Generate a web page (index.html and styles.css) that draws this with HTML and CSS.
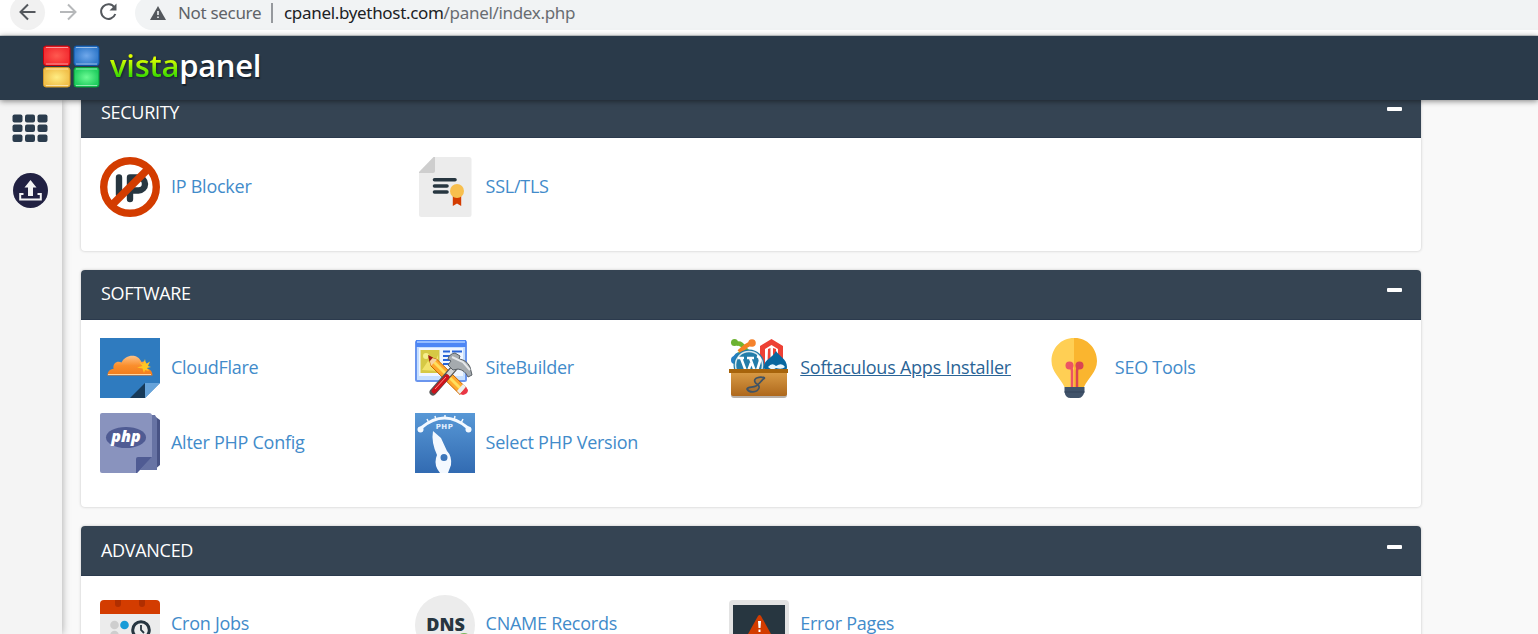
FILE: index.html
```html
<!DOCTYPE html>
<html lang="en">
<head>
<meta charset="utf-8">
<title>vistapanel</title>
<link rel="stylesheet" href="styles.css">
</head>
<body>
<div class="browser">
  <span class="nav-back"><svg width="35" height="35" viewBox="0 0 35 35"><path d="M25.500 17H11M18 9.500 10.500 17l7.500 7.500" fill="none" stroke="#54585d" stroke-width="2"/></svg></span>
  <svg class="nav-forward" width="20" height="20" viewBox="0 0 20 20"><path d="M2 10h15M10 2.500 17.500 10 10 17.500" fill="none" stroke="#b6b8ba" stroke-width="2"/></svg>
  <svg class="nav-reload" width="20" height="20" viewBox="0 0 20 20"><path d="M16.500 5.500A7.300 7.300 0 1 0 17.300 12" fill="none" stroke="#54585d" stroke-width="2"/><path d="M18.500 1.500v7h-7z" fill="#54585d"/></svg>
  <div class="address">
    <svg class="warn" width="16" height="14" viewBox="0 0 16 14"><path d="M8 0l8 14H0z" fill="#54585d"/><path d="M7.200 5h1.600v4H7.200zM7.200 10.400h1.600V12H7.200z" fill="#f1f3f4"/></svg>
    <span class="insecure">Not secure</span><span class="divider"></span>
    <span class="url">cpanel.byethost.com<span class="path">/panel/index.php</span></span>
  </div>
</div>
<header class="topbar">
  <svg class="logo" width="57" height="43" viewBox="0 0 57 43">
    <defs>
      <radialGradient id="lr"><stop offset="0" stop-color="#ff5a50"/><stop offset="1" stop-color="#f32c31"/></radialGradient>
      <radialGradient id="lb"><stop offset="0" stop-color="#70a8eb"/><stop offset="1" stop-color="#3179ca"/></radialGradient>
      <radialGradient id="ly"><stop offset="0" stop-color="#ffed83"/><stop offset="1" stop-color="#f1c04b"/></radialGradient>
      <radialGradient id="lg"><stop offset="0" stop-color="#6dfb94"/><stop offset="1" stop-color="#22cf60"/></radialGradient>
    </defs>
    <rect x=".5" y="1" width="26.500" height="19.500" rx="2.500" fill="url(#lr)" stroke="#c9000b"/>
    <rect x="31" y="1" width="25" height="19.500" rx="2.500" fill="url(#lb)" stroke="#0d55a8"/>
    <rect x=".5" y="22.500" width="26.500" height="19.500" rx="2.500" fill="url(#ly)" stroke="#d39a2a"/>
    <rect x="31" y="22.500" width="25" height="19.500" rx="2.500" fill="url(#lg)" stroke="#079d39"/>
    <path d="M3 2.500h22M33 2.500h21M3 24h22M33 24h21M3 40.500h22M33 40.500h21M3 19h22M33 19h21" stroke="#fff" stroke-opacity=".5"/>
  </svg>
  <span class="brand"><span class="brand-green">vista</span><span class="brand-white">panel</span></span>
</header>
<div class="workspace">
  <nav class="sidebar">
    <svg width="36" height="29" viewBox="0 0 36 29" fill="#2b3c4d"><rect x=".5" y=".5" width="10" height="8" rx="2"/><rect x="13" y=".5" width="10" height="8" rx="2"/><rect x="25.500" y=".5" width="10" height="8" rx="2"/><rect x=".5" y="10.500" width="10" height="7.500" rx="2"/><rect x="13" y="10.500" width="10" height="7.500" rx="2"/><rect x="25.500" y="10.500" width="10" height="7.500" rx="2"/><rect x=".5" y="20.500" width="10" height="7.500" rx="2"/><rect x="13" y="20.500" width="10" height="7.500" rx="2"/><rect x="25.500" y="20.500" width="10" height="7.500" rx="2"/></svg>
    <svg class="upload" width="35" height="35" viewBox="0 0 35 35"><circle cx="17.500" cy="17.500" r="17.500" fill="#212142"/><path d="M17.500 7l6 7.500H20V23h-5v-8.500h-3.500z" fill="#f4f4f4"/><path d="M10.500 21H7.200v5.500h20.600V21h-3.300" fill="none" stroke="#f4f4f4" stroke-width="2"/></svg>
  </nav>
  <main class="main">
    <section class="panel">
      <h2 class="panel-head">SECURITY<span class="minus"></span></h2>
      <div class="panel-body">
        <a class="item"><svg class="icon" viewBox="0 0 60 60"><circle cx="30" cy="30" r="26.500" fill="#fff"/><path d="M19 20.500v17M30 42V20.500h8.500a6.500 6.500 0 0 1 0 13H30" fill="none" stroke="#273640" stroke-width="6.400" stroke-linecap="round" stroke-linejoin="round"/><path d="M13 47 47 13" stroke="#d33c00" stroke-width="7.500"/><circle cx="30" cy="30" r="26.300" fill="none" stroke="#d33c00" stroke-width="7.400"/></svg>IP Blocker</a>
        <a class="item"><svg class="icon" viewBox="0 0 60 60"><path d="M20 0h34q2.500 0 2.500 2.500v55q0 2.500-2.500 2.500H6.500Q4 60 4 57.500V16z" fill="#ececec"/><path d="M18.500 0H20v14q0 2-2 2H4v-1z" fill="#cecece"/><path d="M19.500 22.800H40M19.500 29H32M19.500 35H32" stroke="#273640" stroke-width="3.600" stroke-linecap="round"/><path d="M37.800 38h8.400v11L42 46.500 37.800 49z" fill="#d33c00"/><circle cx="42" cy="34" r="7" fill="#f7bf4e"/></svg>SSL/TLS</a>
      </div>
    </section>
    <section class="panel panel-software">
      <h2 class="panel-head">SOFTWARE<span class="minus"></span></h2>
      <div class="panel-body">
        <a class="item"><svg class="icon" viewBox="0 0 60 60"><defs><linearGradient id="cf" x2="0" y2="1"><stop offset="0" stop-color="#ffc184"/><stop offset=".5" stop-color="#fa8e2c"/><stop offset="1" stop-color="#f27b1a"/></linearGradient></defs><path d="M0 0h60v45L45 60H0z" fill="#2f7bbf"/><path d="M45 45v15H30z" fill="#173a59"/><path d="M45 45h15L45 60z" fill="#66a3da"/><path d="M7.500 37.500c0-4 2.500-6.500 6-6.500-1-6 4-8.500 8-6.500 4-8 16-9.500 20-.5 2-1 4-.5 5 1 1 2 .5 4-.5 5.500 4 0 6.500 3 6.500 7z" fill="url(#cf)"/><path d="M45 21l1 5 4-2.500-2 4.500 3 1-4 1 2 3-4-1-1 3-1.500-4.500-5.500-1 5.500-1.500-3.500-4 4 2z" fill="#ffc722"/><path d="M8 36.500h43" fill="none" stroke="#ffd6a0" stroke-width="1"/></svg>CloudFlare</a>
        <a class="item"><svg class="icon" viewBox="0 0 60 60"><rect x="1" y="3" width="50" height="40" rx="1.500" fill="#c6dfff" stroke="#6a95ee" stroke-width="2"/><path d="M1 2h50v7H1z" fill="#4c86f5"/><path d="M2 4h48" stroke="#95bdff" stroke-width="2"/><rect x="4" y="10" width="44" height="28" fill="#f0f6ff"/><rect x="5.500" y="12" width="19" height="23" fill="#d6c945"/><path d="M7 32l6-9 5 5 5-11v16z" fill="#f2e36b"/><circle cx="11" cy="18" r="3" fill="#f5ef8c"/><path d="M28 13.500h7M37 13.500h10M28 18h14M28 22h10M28 26h8" stroke="#2864d8" stroke-width="2"/><g transform="translate(1 1)"><path d="M13 18l8 2.500L50 48.500 44 55.500 15 27z" fill="#ffa92d" stroke="#c66100"/><path d="M18 23l29 29" stroke="#ffdf5e" stroke-width="3"/><path d="M13 18l8 2.500-6 6.500z" fill="#f7d2a0"/><path d="M12 16l5 2.500-3.500 4z" fill="#9f1714"/><path d="M41 52l6-7 3 3-6 7z" fill="#eee"/><path d="M44 55l6-7 2 3q0 4-5 5z" fill="#e93645"/></g><path d="M18 54 40 29" stroke="#555" stroke-width="7" stroke-linecap="round"/><path d="M33 37 40 29" stroke="#d6d6d6" stroke-width="4.500"/><path d="M19 53 32 39" stroke="#ce121a" stroke-width="5" stroke-linecap="round"/><path d="M20 51 31 39" stroke="#ff8b82" stroke-width="1"/><path d="M33 21q1-5 7-6l5 3-1 3q8 1 11 8l2 8-4 2q-3-7-10-8l-5 1-5-5 3-4z" fill="#a5aaae" stroke="#5a6066"/><path d="M37 19l11 5 7 8" fill="none" stroke="#e5e7e9" stroke-width="2"/></svg>SiteBuilder</a>
        <a class="item is-hover"><svg class="icon" viewBox="0 0 60 60"><defs><linearGradient id="bx" x2="0" y2="1"><stop offset="0" stop-color="#d99b45"/><stop offset="1" stop-color="#ae681c"/></linearGradient></defs><path d="M7 6q5-2 8 4l5 5M6 24q0-8 10-10" fill="none" stroke="#74b52d" stroke-width="4.500"/><path d="M10 14l7-6q4-3 7-2" fill="none" stroke="#f58220" stroke-width="4.500"/><circle cx="5.500" cy="4.500" r="3.500" fill="#6db232"/><circle cx="23" cy="5" r="3.800" fill="#f5822c"/><path d="M6 23q-1-5 4-7" fill="none" stroke="#267fc4" stroke-width="4"/><circle cx="6" cy="22" r="4" fill="#267fc4"/><path d="M31 30V8l11.500-7L54 8v22h-5V11l-6.500-4L36 11v19z" fill="#ed4135"/><path d="M39 11l2.500-1v14h-3zM44 10l3 1v10h-3z" fill="#ed4135"/><circle cx="20" cy="27" r="15.500" fill="#247da9"/><circle cx="20" cy="27" r="13.500" fill="none" stroke="#d9e8ef" stroke-width="1.500"/><path d="M9 20h6m3 0h7M12 20l6 16 4-11M21 20l6 16 4-13q0-4-3-5" fill="none" stroke="#fff" stroke-width="2.600"/><path d="M47 13c3 5 11 8 11 16 0 12-23 12-23 0 0-8 9-9 12-16z" fill="#08679f"/><path d="M39 29q4-5 8-1 6-4 9 1-3 3-9 1-4 3-8-1z" fill="#e8f7ff"/><path d="M2 35h56v22q0 3-3 3H5q-3 0-3-3z" fill="#b8b0a8"/><path d="M2 34h56v22q0 2-3 2H5q-3 0-3-2z" fill="url(#bx)"/><path d="M0 31h59v4H0z" fill="#a7640c"/><path d="M36 40c-5-2-12 0-10 4 1 3 5 2 4 6-2 5-10 5-12 1 1-3 6-1 9-3 4-2 5-6 9-8" fill="#405364" fill-opacity=".15" stroke="#405364" stroke-width="1.700"/></svg>Softaculous Apps Installer</a>
        <a class="item"><svg class="icon" viewBox="0 0 60 60"><path d="M30 0h1c12 0 22 10 22 23 0 11-9 17-13 26H30z" fill="#fab52f"/><path d="M30 0C17 0 7.500 10 7.500 23c0 11 9 17 13 26H30z" fill="#ffcf54"/><circle cx="25.500" cy="27.500" r="4" fill="#ec5464"/><circle cx="35.500" cy="27.500" r="4" fill="#da4453"/><path d="M25 28q3 1 3 5v16" fill="none" stroke="#ec5464" stroke-width="2.500"/><path d="M36 28q-3 1-3 5v16" fill="none" stroke="#da4453" stroke-width="2.500"/><path d="M20.500 49h20v5q-2 6-6 6h-8q-5 0-6-6z" fill="#40536a"/><path d="M20.500 54h20" stroke="#33445b"/></svg>SEO Tools</a>
        <a class="item"><svg class="icon" viewBox="0 0 60 60"><path d="M50 2h3l7 5v45l-6 5H38z" fill="#485385"/><path d="M50 2h5l2 4v51H38z" fill="#6773a4"/><path d="M2 0h47q3 0 3 3v41L37 60H2q-2 0-2-2V2q0-2 2-2z" fill="#8993be"/><path d="M52 44 37 60H36V46q0-2 2-2z" fill="#4f5b93"/><ellipse cx="26" cy="24.500" rx="20" ry="10.500" fill="#4f5b93"/><text x="26" y="28.500" text-anchor="middle" class="php-label">php</text></svg>Alter PHP Config</a>
        <a class="item"><svg class="icon" viewBox="0 0 60 60"><defs><linearGradient id="dial" x2="0" y2="1"><stop offset="0" stop-color="#5898d6"/><stop offset="1" stop-color="#326bb2"/></linearGradient></defs><path d="M0 0h60v60H0z" fill="url(#dial)"/><path d="M6 15q23.500-20 47 0" fill="none" stroke="#f4f9ff" stroke-width="3"/><path d="M12 6l2 4M20 3l1 4M30 2v3M40 3l-1 4M48 6l-2 4" stroke="#f4f9ff" stroke-width="1.500"/><circle cx="5.500" cy="16.500" r="3" fill="#f4f9ff"/><circle cx="53.500" cy="16.500" r="3" fill="#f4f9ff"/><text x="29.500" y="16.200" text-anchor="middle" class="dial-label">PHP</text><path fill-rule="evenodd" d="M18 18l8 7 6 13q5 5 4 14l-3 8h-8q-6-7-4-15l1-3q-6-13-4-24zM29 41a3.500 3.500 0 1 0 0 7 3.500 3.500 0 0 0 0-7z" fill="#f4f9ff"/></svg>Select PHP Version</a>
      </div>
    </section>
    <section class="panel panel-advanced">
      <h2 class="panel-head">ADVANCED<span class="minus"></span></h2>
      <div class="panel-body">
        <a class="item"><svg class="icon" viewBox="0 0 60 60"><path d="M0 15h60v45H0z" fill="#ececec"/><path d="M4 5h52q4 0 4 4v10H0V9q0-4 4-4z" fill="#d33c00"/><path d="M15 5h6v4a3 3 0 0 1-6 0zM39 5h6v4a3 3 0 0 1-6 0z" fill="#b02e00"/><circle cx="14.500" cy="30" r="4.300" fill="#cecece"/><circle cx="24.500" cy="30" r="4.300" fill="#179bd7"/><circle cx="14.500" cy="40" r="4.300" fill="#cecece"/><circle cx="41" cy="35" r="8.300" fill="#ececec" stroke="#273640" stroke-width="3"/><path d="M41 30v5l3 3" fill="none" stroke="#273640" stroke-width="1.800"/></svg>Cron Jobs</a>
        <a class="item"><svg class="icon" viewBox="0 0 60 60"><circle cx="30" cy="30" r="30" fill="#ececec"/><circle cx="49" cy="46" r="8" fill="#78b75b"/><text x="30.500" y="35.500" text-anchor="middle" class="dns-label">DNS</text></svg>CNAME Records</a>
        <a class="item"><svg class="icon" viewBox="0 0 60 60"><rect y="5" width="60" height="52" rx="4" fill="#e3e3e3"/><path d="M4 10h52v45H4z" fill="#273640"/><path d="M29 21q1.500-2 3 0l10 18q0 2-2 2H21q-2 0-2-2z" fill="#d33c00"/><path d="M29 26h3l-.5 7h-2zM29.500 34.500h2V37h-2z" fill="#fff"/></svg>Error Pages</a>
      </div>
    </section>
  </main>
</div>
</body>
</html>
```
FILE: styles.css
```css
* { box-sizing: border-box; }
body { margin: 0; height: 634px; overflow: hidden; background: #f9f9f9; font-family: "Open Sans", "Noto Sans", sans-serif; }
svg { display: block; flex: none; }
.browser { height: 36px; display: flex; align-items: flex-start; background: #fff; border-bottom: 1px solid #d5d9dc; padding-left: 10px; overflow: hidden; }
.nav-back { width: 35px; height: 35px; margin-top: -5px; border-radius: 50%; background: #f1f1f1; }
.nav-forward { margin: 2px 0 0 13px; }
.nav-reload { margin: 2px 0 0 20px; }
.address { flex: 1; height: 34px; margin: -4px -20px 0 17px; padding: 0 0 2px 15px; border-radius: 17px; background: #f1f3f4; display: flex; align-items: center; font-family: "Noto Sans", sans-serif; font-size: 17px; letter-spacing: -.32px; white-space: nowrap; }
.warn { margin-top: 2px; }
.insecure { width: 84px; margin-left: 12px; color: #5f6368; }
.divider { width: 2px; height: 20px; margin: 2px 11px 0 9px; background: #96999d; }
.url { color: #202124; }
.path { color: #696d72; }
.topbar { position: relative; z-index: 2; height: 64px; padding: 9px 0 0 43px; display: flex; background: #2a3a4a; box-shadow: 0 1px 6px rgba(0,0,0,.5); }
.brand { margin-left: 10px; font: 600 31px/40px "Open Sans", sans-serif; letter-spacing: -.28px; white-space: nowrap; }
.brand-green { background: linear-gradient(#dfff00 35%, #3fdc00 75%); color: transparent; -webkit-background-clip: text; background-clip: text; filter: drop-shadow(1px 1px 1px #17212b); }
.brand-white { color: #fff; text-shadow: 1px 2px 1px #17212b; }
.workspace { height: 534px; display: flex; overflow: hidden; }
.sidebar { width: 62px; padding: 14px 0 0 12px; display: flex; flex-direction: column; gap: 30px; background: #f4f4f4; box-shadow: 0 0 8px rgba(0,0,0,.35); }
.upload { margin-left: 1px; }
.main { width: 1340px; margin: -12px 0 0 19px; display: flex; flex-direction: column; gap: 19px; }
.panel { flex: none; background: #fff; border-radius: 4px; box-shadow: 0 0 3px rgba(0,0,0,.22); overflow: hidden; }
.panel-head { height: 50px; margin: 0; padding: 0 19px 1px 20px; display: flex; align-items: center; justify-content: space-between; background: #354453; border-bottom: 1px solid #2b3a4d; color: #fff; font-size: 18px; font-weight: 400; letter-spacing: -.3px; }
.panel-head { padding-bottom: 2px; }
.panel-software .panel-head { padding-bottom: 4px; }
.minus { width: 15px; height: 4px; margin-bottom: 5px; border-radius: 1px; background: #fff; }
.panel-body { padding: 19px; display: grid; grid-template-columns: repeat(4, 314.600px); grid-auto-rows: 75px; }
.panel-software .panel-body { padding-top: 18px; }
.item { display: flex; align-items: flex-start; color: #428bca; font-size: 18px; line-height: 58px; letter-spacing: -.26px; white-space: nowrap; }
.panel-advanced .item { line-height: 56px; }
.icon { width: 60px; height: 60px; margin-right: 11px; }
.is-hover { color: #2a6496; text-decoration: underline; letter-spacing: -.23px; }
.php-label { font: italic 800 16px "Open Sans", sans-serif; letter-spacing: 0; fill: #fff; }
.dial-label { font: 700 7px "DejaVu Sans", sans-serif; letter-spacing: .5px; fill: #e4f0ff; }
.dns-label { font: 800 18px "Open Sans", sans-serif; letter-spacing: 0; fill: #273640; }
```
